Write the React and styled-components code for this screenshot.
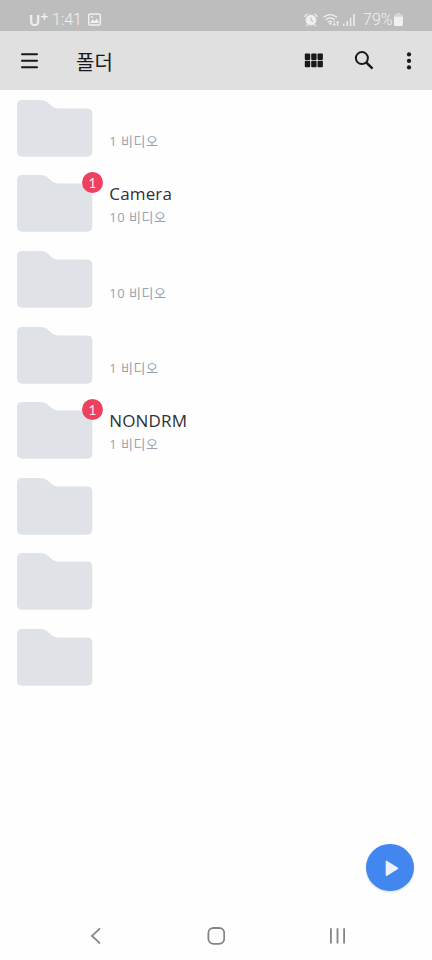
import React from "react";
import styled, { createGlobalStyle } from "styled-components";

const GlobalStyle = createGlobalStyle`
  * { box-sizing: border-box; }
  body { margin: 0; background: #fefefe; }
  svg { display: block; flex: none; }
`;

const Screen = styled.div`
  position: relative;
  display: flex;
  flex-direction: column;
  width: 432px;
  height: 960px;
  overflow: hidden;
  background: #fefefe;
  font-family: "Noto Sans", "Noto Sans CJK KR", sans-serif;
`;

const StatusBar = styled.div`
  display: flex;
  justify-content: space-between;
  height: 31px;
  flex: none;
  padding: 8px 29px 0;
  background: #bdbdbd;
  color: #f0f0f0;
`;

const StatusGroup = styled.div`
  display: flex;
  align-items: center;
  height: 23px;
`;

const Carrier = styled.span`
  display: flex;
  width: 18px;
  margin-right: 5px;
  font: 700 15px/24px Lato, sans-serif;
`;

const CarrierPlus = styled.span`
  font-size: 14px;
  line-height: 15px;
`;

const StatusText = styled.span`
  width: ${(p) => p.$width}px;
  margin-right: ${(p) => p.$gap}px;
  font: 300 16px/24px Roboto, sans-serif;
  white-space: nowrap;
`;

const AppBar = styled.header`
  display: flex;
  align-items: center;
  height: 59px;
  flex: none;
  padding: 0 20px;
  background: #e0e0e0;
  color: #19191b;
`;

const IconButton = styled.button`
  display: flex;
  margin: 0 0 0 ${(p) => p.$gap || 0}px;
  padding: 0;
  border: 0;
  background: none;
  color: inherit;
`;

const Title = styled.h1`
  flex: 1;
  margin: 0 0 0 37px;
  padding-top: 2px;
  font: 400 20px/30px "Noto Sans CJK KR", sans-serif;
`;

const FolderList = styled.ul`
  flex: 1;
  margin: 0;
  padding: 9.8px 17px 0;
  list-style: none;
`;

const FolderRow = styled.li`
  display: flex;
  height: 75.6px;
`;

const FolderThumb = styled.div`
  position: relative;
  width: 76px;
  height: 57px;
  flex: none;
`;

const Badge = styled.span`
  position: absolute;
  top: -3px;
  right: -10px;
  width: 21px;
  height: 21px;
  border-radius: 50%;
  background: #ee405f;
  color: #fbeaf0;
  font: 400 13.5px/22px Lato, sans-serif;
  text-align: center;
`;

const FolderText = styled.div`
  display: flex;
  flex-direction: column;
  padding: 6.6px 0 0 16.3px;
`;

const FolderName = styled.span`
  height: 23px;
  color: #303038;
  font: 400 17px/24px "Open Sans", sans-serif;
  letter-spacing: 0.15px;
`;

const FolderCount = styled.span`
  height: 22px;
  color: #98a2af;
  font: 400 13px/24px "Open Sans", "Noto Sans CJK KR", sans-serif;
  letter-spacing: 0.5px;
  white-space: nowrap;
`;

const PlayButton = styled.button`
  position: absolute;
  right: 18px;
  bottom: 69px;
  display: flex;
  width: 48px;
  height: 47.5px;
  padding: 0;
  border: 0;
  border-radius: 50%;
  background: #4286ef;
  box-shadow: 0 1px 2px rgba(40, 70, 120, 0.2);
`;

const NavBar = styled.nav`
  display: flex;
  align-items: center;
  justify-content: space-between;
  height: 48px;
  flex: none;
  padding: 0 86px 1px 89px;
  color: #858585;
`;

const folders = [
  { count: "1 비디오" },
  { name: "Camera", count: "10 비디오", badge: 1 },
  { count: "10 비디오" },
  { count: "1 비디오" },
  { name: "NONDRM", count: "1 비디오", badge: 1 },
  {},
  {},
  {},
];

const PictureIcon = () => (
  <svg width="13" height="13" viewBox="0 0 13 13">
    <rect x="0.7" y="0.9" width="11.6" height="11" rx="1.4" fill="none" stroke="currentColor" strokeWidth="1.5" />
    <path d="M1.8 10 4.6 6.2 6.5 8.2 8.6 5.6 11.3 10Z" fill="currentColor" />
    <circle cx="4" cy="4" r="1" fill="currentColor" />
  </svg>
);

const AlarmIcon = () => (
  <svg width="14" height="14" viewBox="0 0 14 14" fill="none" stroke="currentColor">
    <circle cx="7" cy="7.1" r="4.9" fill="currentColor" />
    <path d="M.8 4Q1.2 1.7 3.6 1.1M13.2 4Q12.8 1.7 10.4 1.1M3.6 11.3 2.4 13.2M10.4 11.3l1.2 1.9" strokeWidth="1.3" />
    <path d="M7 4.3v3l2 1.2" stroke="#bdbdbd" strokeWidth="1.1" />
  </svg>
);

const WifiIcon = () => (
  <svg width="17" height="14" viewBox="0 0 17 14" fill="none" stroke="currentColor" strokeWidth="1.3">
    <path d="M.5 4.3Q7.2-1.2 14 4.3M2.7 6.8Q7.2 3 11.8 6.8M4.9 9.2Q7.2 7.2 9.2 9" />
    <path d="m5.8 10.5 1.5-1 1.5 1L7.3 12Z" fill="currentColor" stroke="none" />
    <path d="M11.2 8v4.5M9.7 11l1.5 1.7 1.5-1.7M14.6 13V8.6M13.1 10.2l1.5-1.7 1.5 1.7" strokeWidth="1" />
  </svg>
);

const SignalIcon = () => (
  <svg width="12" height="12" viewBox="0 0 12 12" stroke="currentColor" strokeWidth="1.4">
    <path d="M.8 9.5V12M4.2 7v5M7.6 4v8M11 0v12" />
  </svg>
);

const BatteryIcon = () => (
  <svg width="9" height="13" viewBox="0 0 9 13" fill="currentColor">
    <path d="M2.8 0h3.4v1.2h1.4Q9 1.2 9 2.5V4H0V2.5Q0 1.2 1.4 1.2h1.4Z" opacity=".45" />
    <path d="M0 3.8h9v7.8Q9 13 7.6 13H1.4Q0 13 0 11.6Z" />
  </svg>
);

const MenuIcon = () => (
  <svg width="19" height="18" viewBox="0 0 19 18" stroke="currentColor" strokeWidth="2" strokeLinecap="round">
    <path d="M2 2.2h15M2 8.7h15M2 15.2h15" />
  </svg>
);

const GridIcon = () => (
  <svg width="19" height="16" viewBox="0 0 19 16" fill="currentColor">
    {[0.6, 7.8].map((y) =>
      [0.8, 7.2, 13.5].map((x) => <rect key={`${x}-${y}`} x={x} y={y} width="5.4" height="6.4" rx="0.9" />)
    )}
  </svg>
);

const SearchIcon = () => (
  <svg width="20" height="20" viewBox="0 0 20 20" fill="none" stroke="currentColor">
    <circle cx="7.9" cy="7.1" r="6" strokeWidth="2" />
    <path d="m12.2 11.4 6.3 6.3" strokeWidth="2.5" />
  </svg>
);

const MoreIcon = () => (
  <svg width="6" height="18" viewBox="0 0 6 18" fill="currentColor">
    <circle cx="3" cy="2.4" r="2.1" />
    <circle cx="3" cy="8.9" r="2.1" />
    <circle cx="3" cy="15.4" r="2.1" />
  </svg>
);

const FolderIcon = () => (
  <svg width="76" height="57" viewBox="0 0 76 57" fill="#dfe2e7">
    <path d="M5.5 0H23Q28 0 31.5 3.2L34.5 6Q37 8.4 41 8.4H70Q75.3 8.4 75.3 13.5V51.5Q75.3 56.7 70 56.7H5.5Q0 56.7 0 51.5V5.2Q0 0 5.5 0Z" />
  </svg>
);

const PlayIcon = () => (
  <svg width="48" height="48" viewBox="0 0 48 48">
    <path d="M20.4 17.3v14L31.6 24.3Z" fill="#edf2fa" stroke="#edf2fa" strokeWidth="1.4" strokeLinejoin="round" />
  </svg>
);

const BackIcon = () => (
  <svg width="13" height="18" viewBox="0 0 13 18" fill="none" stroke="currentColor" strokeWidth="1.8">
    <path d="M11 1.4 3 8.9l8 7.4" />
  </svg>
);

const HomeIcon = () => (
  <svg width="18" height="18" viewBox="0 0 18 18" fill="none" stroke="currentColor" strokeWidth="1.8">
    <rect x="1.4" y="1" width="15.8" height="15.8" rx="5" />
  </svg>
);

const RecentIcon = () => (
  <svg width="17" height="18" viewBox="0 0 17 18" stroke="currentColor" strokeWidth="1.8">
    <path d="M1.9 1.2v15.3M8.5 1.2v15.3M15.1 1.2v15.3" />
  </svg>
);

const Folder = ({ name, count, badge }) => (
  <FolderRow>
    <FolderThumb>
      <FolderIcon />
      {badge && <Badge>{badge}</Badge>}
    </FolderThumb>
    <FolderText>
      <FolderName>{name}</FolderName>
      <FolderCount>{count}</FolderCount>
    </FolderText>
  </FolderRow>
);

export default function App() {
  return (
    <Screen>
      <GlobalStyle />
      <StatusBar>
        <StatusGroup>
          <Carrier>U<CarrierPlus>+</CarrierPlus></Carrier>
          <StatusText $width={30} $gap={6}>1:41</StatusText>
          <PictureIcon />
        </StatusGroup>
        <StatusGroup>
          <AlarmIcon />
          <IconButton as="span" $gap={5}><WifiIcon /></IconButton>
          <IconButton as="span" $gap={3}><SignalIcon /></IconButton>
          <IconButton as="span" $gap={8}>
            <StatusText $width={30} $gap={1}>79%</StatusText>
          </IconButton>
          <BatteryIcon />
        </StatusGroup>
      </StatusBar>
      <AppBar>
        <IconButton aria-label="메뉴"><MenuIcon /></IconButton>
        <Title>폴더</Title>
        <IconButton aria-label="격자 보기"><GridIcon /></IconButton>
        <IconButton aria-label="검색" $gap={31}><SearchIcon /></IconButton>
        <IconButton aria-label="더보기" $gap={32}><MoreIcon /></IconButton>
      </AppBar>
      <FolderList>
        {folders.map((folder, i) => <Folder key={i} {...folder} />)}
      </FolderList>
      <NavBar>
        <IconButton aria-label="뒤로"><BackIcon /></IconButton>
        <IconButton aria-label="홈"><HomeIcon /></IconButton>
        <IconButton aria-label="최근 앱"><RecentIcon /></IconButton>
      </NavBar>
      <PlayButton aria-label="재생"><PlayIcon /></PlayButton>
    </Screen>
  );
}
